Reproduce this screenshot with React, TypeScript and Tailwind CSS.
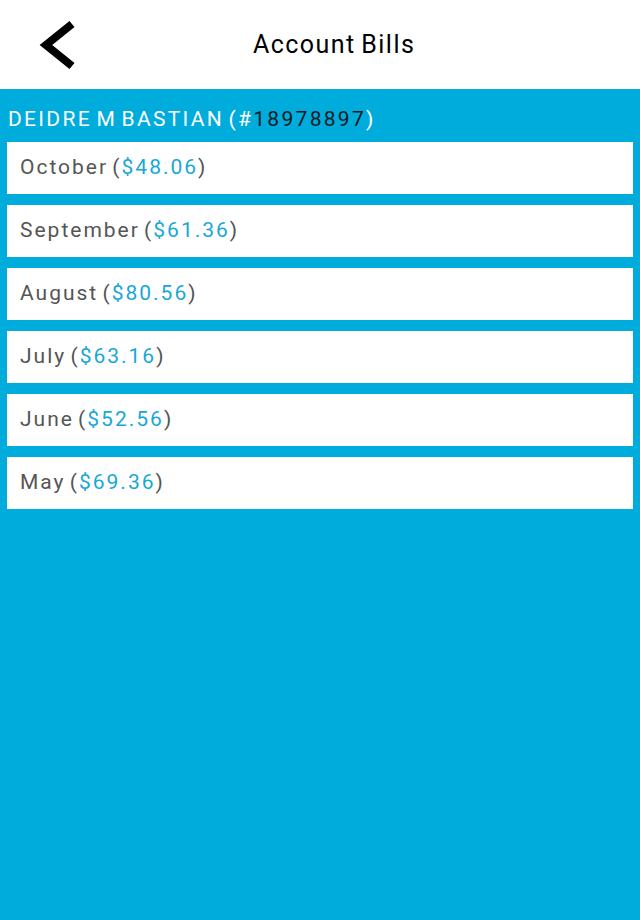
import React from "react";

const bills = [
  { month: "October", amount: "$48.06" },
  { month: "September", amount: "$61.36" },
  { month: "August", amount: "$80.56" },
  { month: "July", amount: "$63.16" },
  { month: "June", amount: "$52.56" },
  { month: "May", amount: "$69.36" },
];

export default function App() {
  return (
    <div
      className="flex h-[920px] w-[640px] flex-col bg-[#00acdc]"
      style={{ fontFamily: "Roboto, 'Noto Sans', sans-serif" }}
    >
      <div className="flex h-[89px] items-center bg-white">
        <button className="ml-[36px] flex h-[50px] w-[44px] items-center justify-center">
          <svg width="44" height="50" viewBox="0 0 44 50">
            <path
              d="M36 4 L10 25 L36 46"
              fill="none"
              stroke="#000"
              strokeWidth="8"
              strokeLinecap="butt"
              strokeLinejoin="miter"
            />
          </svg>
        </button>
        <h1 className="ml-[173px] text-[25px] tracking-[1.45px] text-black [word-spacing:-2px]">
          Account Bills
        </h1>
      </div>

      <div className="flex flex-col px-[7px] pt-[17px]">
        <p className="ml-px text-[21px] leading-[26px] tracking-[2.3px] text-white [word-spacing:-3px]">
          DEIDRE M BASTIAN (#<span className="text-[#0b1a22]">18978897</span>)
        </p>
        <div className="mt-[10px] flex flex-col gap-[11px]">
          {bills.map((b) => (
            <div
              key={b.month}
              className="flex h-[52px] items-center bg-white pl-[13px] text-[21px] tracking-[2px] text-[#555555] [word-spacing:-3px]"
            >
              {b.month} (<span className="text-[#19a7d8]">{b.amount}</span>)
            </div>
          ))}
        </div>
      </div>
    </div>
  );
}
